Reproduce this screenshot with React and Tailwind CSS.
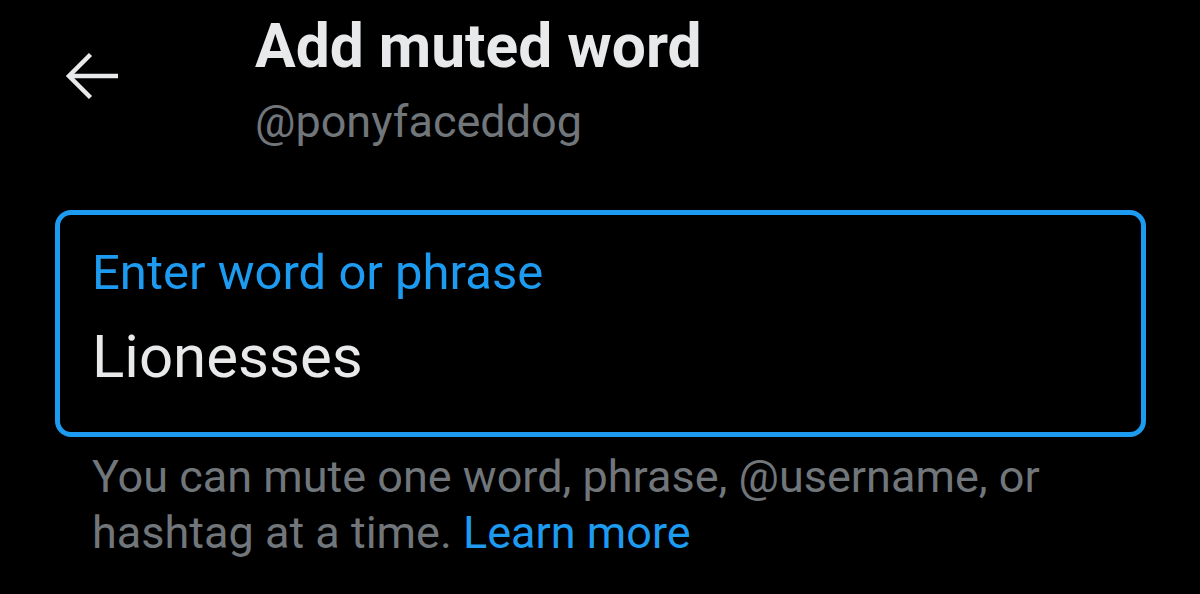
export default function App() {
  return (
    <div
      className="w-[1200px] h-[594px] bg-black overflow-hidden"
      style={{ fontFamily: 'Roboto, "Noto Sans", sans-serif' }}
    >
      <div className="flex items-start">
        <svg
          className="ml-[62px] mt-[50px] shrink-0"
          width="60"
          height="52"
          viewBox="0 0 60 52"
          fill="none"
          stroke="#e7e9ea"
          strokeWidth="4.5"
        >
          <path d="M56 26H7" />
          <path d="M28.5 4.5L7 26L28.5 47.5" strokeLinejoin="miter" />
        </svg>
        <div className="ml-[133px] pt-[11px]">
          <div className="text-[60.5px] leading-[72px] font-bold text-[#e7e9ea]">
            Add muted word
          </div>
          <div className="mt-[11px] text-[45px] leading-[56px] text-[#71767b]">
            @ponyfaceddog
          </div>
        </div>
      </div>

      <div className="mt-[60px] pl-[55px] pr-[54px]">
        <div className="border-[5px] border-[#1d9bf0] rounded-[16px] pl-[32px] pt-[30px] pb-[41px]">
          <div className="text-[49px] leading-[56px] text-[#1d9bf0]">
            Enter word or phrase
          </div>
          <div className="mt-[22px] text-[60px] leading-[68px] text-[#e7e9ea]">
            Lionesses
          </div>
        </div>
        <div className="mt-[12px] pl-[37px] text-[45px] leading-[56px] text-[#71767b]">
          You can mute one word, phrase, @username, or hashtag at a time.{' '}
          <span className="text-[#1d9bf0]">Learn more</span>
        </div>
      </div>
    </div>
  );
}
